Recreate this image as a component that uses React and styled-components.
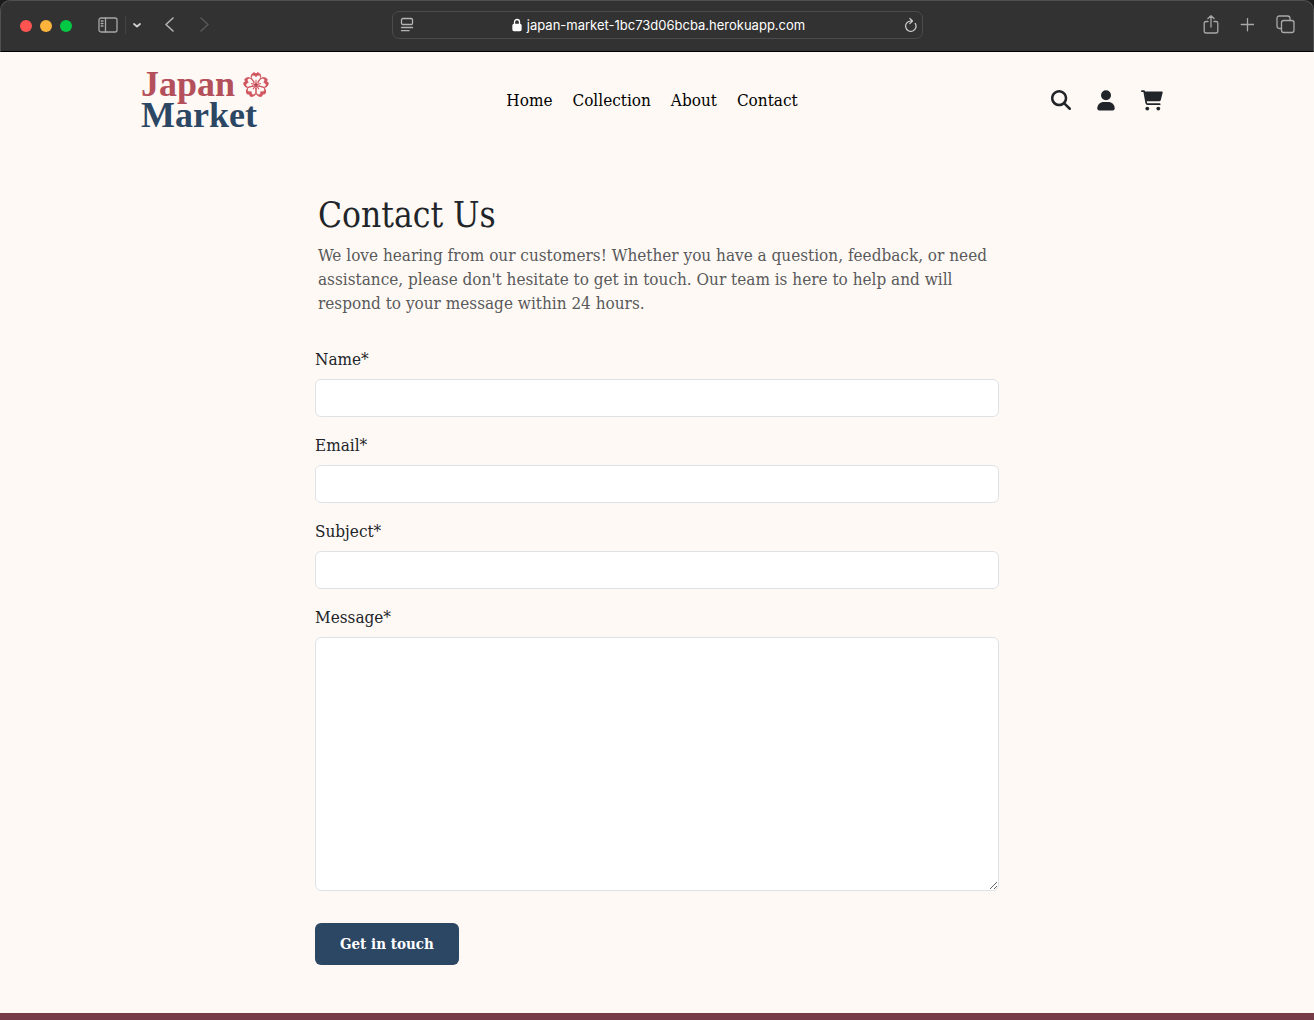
import React from "react";
import styled, { createGlobalStyle } from "styled-components";
import { FaMagnifyingGlass } from "react-icons/fa6";

const serif = `"DejaVu Serif Condensed", "DejaVu Serif", "Liberation Serif", serif`;

const GlobalStyle = createGlobalStyle`
  *, *::before, *::after { box-sizing: border-box; }
  body {
    margin: 0;
    background: #fff9f5;
    color: #212529;
    font-family: ${serif};
    font-size: 17px;
    line-height: 24px;
  }
`;

const Page = styled.div`
  min-height: 100vh;
  display: flex;
  flex-direction: column;
  background: #fff9f5;
`;

/* Browser window bar */
const WindowFrame = styled.div`
  background: #1b1b1b;
`;

const BrowserBar = styled.div`
  display: grid;
  grid-template-columns: 1fr minmax(200px, 531px) 1fr;
  align-items: center;
  height: 52px;
  padding: 0 18px;
  padding-bottom: 2px;
  background: #323232;
  border: 1px solid #505050;
  border-bottom: 1px solid #000;
  border-radius: 10px 10px 0 0;
`;

const BarGroup = styled.div`
  display: flex;
  align-items: center;
  justify-content: ${(p) => (p.$end ? "flex-end" : "flex-start")};
  gap: ${(p) => p.$gap}px;
`;

const Lights = styled.div`
  display: flex;
  gap: 8px;
  margin: 2px 26px 0 1px;
`;

const Light = styled.span`
  width: 12px;
  height: 12px;
  border-radius: 50%;
  background: ${(p) => p.$color};
`;

const BarButton = styled.button`
  display: flex;
  padding: 0;
  border: 0;
  background: none;
  color: ${(p) => p.$color || "#a8a8a8"};
`;

const Divider = styled.span`
  width: 1px;
  height: 18px;
  margin: 0 7px;
  background: #444;
`;

const HistoryButtons = styled.div`
  display: flex;
  gap: 24px;
  margin-left: 23px;
`;

const AddressBar = styled.div`
  display: flex;
  align-items: center;
  justify-content: space-between;
  height: 28px;
  padding: 0 5px 0 7px;
  border: 1px solid #4b4b4b;
  border-radius: 7px;
`;

const Address = styled.span`
  display: flex;
  align-items: center;
  gap: 5px;
  color: #fff;
  font: 400 13px/16px Inter, "Liberation Sans", sans-serif;
  white-space: nowrap;
`;

/* Site header */
const Header = styled.header`
  display: grid;
  grid-template-columns: 1fr auto 1fr;
  align-items: center;
  width: 100%;
  max-width: 1032px;
  height: 96px;
  margin: 0 auto;
  padding-right: 10px;
`;

const Logo = styled.a`
  justify-self: start;
  font: bold 36px/31px "Liberation Serif", serif;
  text-decoration: none;
`;

const LogoLine = styled.span`
  display: flex;
  align-items: center;
  gap: 8px;
  color: ${(p) => p.$color};
`;

const Nav = styled.nav`
  display: flex;
  gap: 20px;
`;

const NavLink = styled.a`
  color: #000;
  text-decoration: none;
`;

const Actions = styled.div`
  display: flex;
  align-items: center;
  justify-content: flex-end;
  gap: 26px;
  font-size: 20px;
`;

const ActionLink = styled.a`
  display: flex;
  color: #212529;
`;

/* Contact form */
const Main = styled.main`
  width: 100%;
  max-width: 684px;
  margin: 0 auto;
  padding: 43px 0 48px;
`;

const Intro = styled.section`
  margin-bottom: 32px;
  padding: 0 3px;
`;

const Title = styled.h1`
  margin: 0 0 4px;
  font: 400 35px/48px ${serif};
`;

const Lead = styled.p`
  margin: 0;
  color: #595a5b;
`;

const Field = styled.div`
  display: flex;
  flex-direction: column;
  gap: 8px;
  margin-bottom: ${(p) => (p.$last ? 32 : 16)}px;
`;

const Label = styled.label`
  align-self: flex-start;
`;

const Input = styled.input`
  width: 100%;
  height: 38px;
  padding: 6px 12px;
  border: 1px solid #dee2e6;
  border-radius: 6px;
  background: #fff;
  font: inherit;
`;

const TextArea = styled.textarea`
  display: block;
  width: 100%;
  height: 254px;
  padding: 6px 12px;
  border: 1px solid #dee2e6;
  border-radius: 6px;
  background: #fff;
  font: inherit;
  resize: vertical;
`;

const Submit = styled.button`
  display: block;
  height: 42px;
  padding: 0 25px;
  border: 0;
  border-radius: 6px;
  background: #2c4764;
  color: #fff;
  font: bold 15px/24px ${serif};
`;

const Footer = styled.footer`
  flex: 1;
  min-height: 7px;
  background: #763d48;
`;

const Icon = ({ w, h, sw = 1.3, children }) => (
  <svg
    width={w}
    height={h}
    viewBox={`0 0 ${w} ${h}`}
    fill="none"
    stroke="currentColor"
    strokeWidth={sw}
    strokeLinecap="round"
    strokeLinejoin="round"
    aria-hidden="true"
  >
    {children}
  </svg>
);

const UserIcon = () => (
  <svg width="18" height="21" viewBox="0 0 18 21" fill="currentColor" aria-hidden="true">
    <circle cx="9" cy="5.2" r="5" />
    <path d="M.3 18.6C.3 14.6 3.2 12.1 6.8 12.1H11.2C14.8 12.1 17.7 14.6 17.7 18.6Q17.7 20.4 16 20.4H2Q.3 20.4 .3 18.6Z" />
  </svg>
);

const CartIcon = () => (
  <svg width="22" height="21" viewBox="0 0 22 21" fill="currentColor" aria-hidden="true">
    <path
      d="M.9 1.2H3.1L5.3 13.2Q5.5 14.2 6.5 14.2H18.7"
      fill="none"
      stroke="currentColor"
      strokeWidth="1.7"
      strokeLinecap="round"
      strokeLinejoin="round"
    />
    <path d="M3.6 1.4H20.8Q22 1.4 21.7 2.6L19.8 10Q19.5 11.3 18.2 11.3H5.4Z" />
    <circle cx="6.3" cy="18.6" r="1.9" />
    <circle cx="17.3" cy="18.6" r="1.9" />
  </svg>
);

const Blossom = () => (
  <svg width="26" height="26" viewBox="-13 -13 26 26" aria-hidden="true">
    {[0, 72, 144, 216, 288].map((angle) => (
      <g key={angle} transform={`rotate(${angle})`} stroke="#d0565f" fill="none" strokeLinecap="round">
        <path
          d="M-1.2-2.6C-3.8-4.2-5.2-7-4.6-9.4C-4.2-10.8-3.2-11.8-1.8-12.2L0-11L1.8-12.2C3.2-11.8 4.2-10.8 4.6-9.4C5.2-7 3.8-4.2 1.2-2.6"
          strokeWidth="1"
        />
        <path
          d="M-4.8-8.4C-4.6-10.8-3.2-11.8-1.8-12.2L0-11L1.8-12.2C3.2-11.8 4.6-10.8 4.8-8.4Q3-10.4 1.4-9.4L0-8L-1.4-9.4Q-3-10.4-4.8-8.4Z"
          fill="#d0565f"
          strokeWidth=".4"
        />
        <path d="M0-1V-4.8" strokeWidth="1" />
      </g>
    ))}
    <circle r="1.9" fill="#c04a55" />
  </svg>
);

const fields = [
  { id: "name", label: "Name*", type: "text" },
  { id: "email", label: "Email*", type: "email" },
  { id: "subject", label: "Subject*", type: "text" },
];

export default function App() {
  return (
    <Page>
      <GlobalStyle />
      <WindowFrame>
        <BrowserBar>
          <BarGroup $gap={0}>
            <Lights>
              <Light $color="#ff5450" />
              <Light $color="#fdb43c" />
              <Light $color="#03c843" />
            </Lights>
            <BarButton aria-label="Sidebar">
              <Icon w={20} h={16}>
                <rect x="1" y="1" width="18" height="14" rx="2" />
                <path d="M7.5 1V15M3.2 4H5M3.2 6.5H5M3.2 9H5" />
              </Icon>
            </BarButton>
            <Divider />
            <BarButton aria-label="Tab groups" $color="#d0d0d0">
              <Icon w={8} h={6} sw={1.8}>
                <path d="M1 2L4 4.5L7 2" />
              </Icon>
            </BarButton>
            <HistoryButtons>
              <BarButton aria-label="Back" $color="#b4b4b4">
                <Icon w={11} h={16} sw={1.6}>
                  <path d="M9 1L2 7.5L9 14" />
                </Icon>
              </BarButton>
              <BarButton aria-label="Forward" $color="#585858">
                <Icon w={11} h={16} sw={1.6}>
                  <path d="M2 1L9 7.5L2 14" />
                </Icon>
              </BarButton>
            </HistoryButtons>
          </BarGroup>
          <AddressBar>
            <BarButton aria-label="Page menu" $color="#b4b4b4">
              <Icon w={14} h={16}>
                <rect x="1.5" y="1.5" width="11" height="6" rx="1.3" />
                <path d="M1.5 10.5H12.5M1.5 13.7H9" />
              </Icon>
            </BarButton>
            <Address>
              <Icon w={10} h={14}>
                <rect x="1" y="6.5" width="8" height="6" rx="1" fill="currentColor" />
                <path d="M2.5 6.5V4a2.5 2.5 0 0 1 5 0V6.5" />
              </Icon>
              japan-market-1bc73d06bcba.herokuapp.com
            </Address>
            <BarButton aria-label="Reload" $color="#d0d0d0">
              <Icon w={13} h={16} sw={1.2}>
                <path d="M11.2 6.4A5.2 5.2 0 1 1 6.8 4H8M5.8 1.3L8.5 4L5.8 6.7" />
              </Icon>
            </BarButton>
          </AddressBar>
          <BarGroup $end $gap={21}>
            <BarButton aria-label="Share">
              <Icon w={16} h={20}>
                <path d="M5 6.5H3Q1.2 6.5 1.2 8.3V16Q1.2 18 3 18H13Q14.8 18 14.8 16V8.3Q14.8 6.5 13 6.5H11M8 12V.7M4.9 3.5L8 .7L11.1 3.5" />
              </Icon>
            </BarButton>
            <BarButton aria-label="New tab">
              <Icon w={14} h={14}>
                <path d="M7.5 .2V12.8M1.2 6.5H13.8" />
              </Icon>
            </BarButton>
            <BarButton aria-label="Tab overview">
              <Icon w={20} h={20}>
                <rect x="6.5" y="5.5" width="12.5" height="12" rx="2.2" />
                <path d="M6.5 13.5H4.5Q2 13.5 2 11V3.5Q2 1 4.5 1H12.5Q15 1 15 3.5V5.5" />
              </Icon>
            </BarButton>
          </BarGroup>
        </BrowserBar>
      </WindowFrame>

      <Header>
        <Logo href="#home">
          <LogoLine $color="#b4505b">
            Japan
            <Blossom />
          </LogoLine>
          <LogoLine $color="#2c4764">Market</LogoLine>
        </Logo>
        <Nav>
          <NavLink href="#home">Home</NavLink>
          <NavLink href="#collection">Collection</NavLink>
          <NavLink href="#about">About</NavLink>
          <NavLink href="#contact">Contact</NavLink>
        </Nav>
        <Actions>
          <ActionLink href="#search" aria-label="Search"><FaMagnifyingGlass /></ActionLink>
          <ActionLink href="#account" aria-label="Account"><UserIcon /></ActionLink>
          <ActionLink href="#cart" aria-label="Cart"><CartIcon /></ActionLink>
        </Actions>
      </Header>

      <Main>
        <Intro>
          <Title>Contact Us</Title>
          <Lead>
            We love hearing from our customers! Whether you have a question, feedback, or need
            assistance, please don't hesitate to get in touch. Our team is here to help and will
            respond to your message within 24 hours.
          </Lead>
        </Intro>
        <form>
          {fields.map((f) => (
            <Field key={f.id}>
              <Label htmlFor={f.id}>{f.label}</Label>
              <Input id={f.id} type={f.type} />
            </Field>
          ))}
          <Field $last>
            <Label htmlFor="message">Message*</Label>
            <TextArea id="message" />
          </Field>
          <Submit type="button">Get in touch</Submit>
        </form>
      </Main>
      <Footer />
    </Page>
  );
}
